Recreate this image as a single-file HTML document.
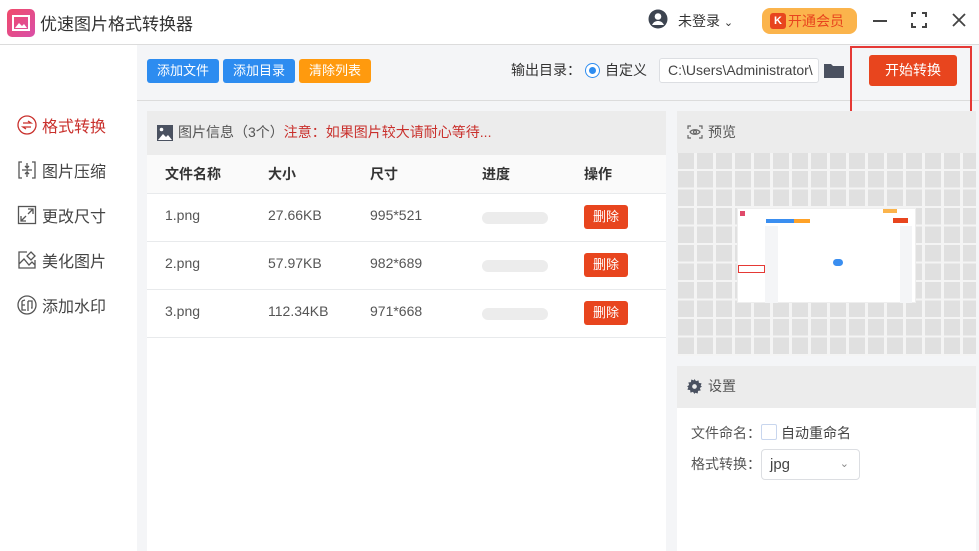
<!DOCTYPE html>
<html><head><meta charset="utf-8"><style>
*{margin:0;padding:0;box-sizing:border-box}
body{width:979px;height:551px;overflow:hidden;background:#fff;font-family:"Liberation Sans","Noto Sans CJK SC",sans-serif;position:relative;color:#333}
.a{position:absolute}
.btn{position:absolute;height:24px;color:#fff;font-size:13px;line-height:24px;text-align:center;border-radius:3px}
.th{position:absolute;top:164px;font-size:14px;color:#333;font-weight:bold}
.td{position:absolute;font-size:14px;color:#555}
.bar{position:absolute;left:482px;width:66px;height:12px;border-radius:6px;background:#ececec}
.del{position:absolute;left:584px;width:44px;height:24px;background:#e8451e;color:#fff;font-size:13px;line-height:24px;text-align:center;border-radius:3px}
.nav{position:absolute;left:17px;font-size:16px;color:#444;display:flex;align-items:center;gap:5px}
.ic{width:20px;height:20px;display:inline-block}
</style></head><body>
<div class="a" style="left:0;top:44px;width:979px;height:1px;background:#dcdcdc"></div>
<div class="a" style="left:7px;top:9px;width:28px;height:28px;border-radius:5px;background:linear-gradient(135deg,#f04a6a,#d94fa8)">
<svg width="28" height="28" viewBox="0 0 28 28"><rect x="6" y="7" width="16" height="14" fill="none" stroke="#fff" stroke-width="2"/><path d="M8 19l4-5 3 3 2-2 3 4z" fill="#fff"/></svg></div>
<div class="a" style="left:40px;top:10px;font-size:17px;color:#333">优速图片格式转换器</div>
<svg class="a" style="left:648px;top:9px" width="20" height="20" viewBox="0 0 20 20"><circle cx="10" cy="10" r="9.5" fill="#3d4450"/><circle cx="10" cy="7.5" r="3.3" fill="#fff"/><path d="M4 16c1.5-3 3.5-4 6-4s4.5 1 6 4" fill="#fff"/></svg>
<div class="a" style="left:678px;top:11px;font-size:14px;color:#333">未登录 <span style="font-size:11px">⌄</span></div>
<div class="a" style="left:762px;top:8px;width:95px;height:26px;border-radius:8px;background:#fbb44c;color:#e8451e;font-size:14px;line-height:26px;padding-left:26px">开通会员</div>
<div class="a" style="left:770px;top:13px;width:16px;height:16px;background:#e8451e;border-radius:3px;color:#fff;font-size:11px;line-height:16px;text-align:center;font-weight:bold">K</div>
<div class="a" style="left:873px;top:20px;width:14px;height:2px;background:#444"></div>
<svg class="a" style="left:911px;top:12px" width="16" height="16" viewBox="0 0 16 16" fill="none" stroke="#444" stroke-width="2"><path d="M1 5V1h4M11 1h4v4M15 11v4h-4M5 15H1v-4"/></svg>
<svg class="a" style="left:952px;top:13px" width="14" height="14" viewBox="0 0 14 14" stroke="#444" stroke-width="1.8"><path d="M1 1l12 12M13 1L1 13"/></svg>
<div class="a" style="left:137px;top:45px;width:842px;height:506px;background:#f4f5f7"></div>
<div class="nav" style="top:113px;color:#c9302c"><svg class="ic" viewBox="0 0 20 20" fill="none" stroke="#c9302c" stroke-width="1.3"><circle cx="10" cy="10" r="9"/><path d="M6 8h8l-3-2M14 12H6l3 2"/></svg>格式转换</div>
<div class="nav" style="top:158px"><svg class="ic" viewBox="0 0 20 20" fill="none" stroke="#555" stroke-width="1.3"><path d="M5 2H2v16h3M15 2h3v16h-3M5 10h10M10 3v5l-2-2M10 8l2-2M10 17v-5l-2 2M10 12l2 2"/></svg>图片压缩</div>
<div class="nav" style="top:203px"><svg class="ic" viewBox="0 0 20 20" fill="none" stroke="#555" stroke-width="1.3"><rect x="1.5" y="1.5" width="17" height="17"/><path d="M11 4h5v5M16 4l-5 5M4 11v5h5M4 16l5-5"/></svg>更改尺寸</div>
<div class="nav" style="top:248px"><svg class="ic" viewBox="0 0 20 20" fill="none" stroke="#555" stroke-width="1.3"><path d="M10 2H2v16h16v-8M2 14l5-5 5 6 3-3 3 3"/><path d="M14 2l4 4-4 4-4-4z"/></svg>美化图片</div>
<div class="nav" style="top:293px"><svg class="ic" viewBox="0 0 20 20" fill="none" stroke="#555" stroke-width="1.3"><circle cx="10" cy="10" r="9"/><path d="M5 6v9h4M5 10h3M8 5l-3 1M11 6h4v7h-1M11 6v10"/></svg>添加水印</div>
<div class="a" style="left:137px;top:100px;width:842px;height:1px;background:#dcdcdc"></div>
<div class="btn" style="left:147px;top:59px;width:72px;background:#2d8cf0">添加文件</div>
<div class="btn" style="left:223px;top:59px;width:72px;background:#2d8cf0">添加目录</div>
<div class="btn" style="left:299px;top:59px;width:72px;background:#ff9a0e">清除列表</div>
<div class="a" style="left:511px;top:60px;font-size:14px;color:#333">输出目录：</div>
<div class="a" style="left:585px;top:63px;width:15px;height:15px;border-radius:50%;border:1px solid #2d8cf0;background:#fff"><div style="margin:3px;width:7px;height:7px;border-radius:50%;background:#2d8cf0"></div></div>
<div class="a" style="left:605px;top:60px;font-size:14px;color:#333">自定义</div>
<div class="a" style="left:659px;top:58px;width:160px;height:25px;background:#fff;border:1px solid #dcdee2;border-radius:3px;font-size:14px;color:#444;line-height:23px;padding-left:8px;overflow:hidden;white-space:nowrap">C:\Users\Administrator\</div>
<svg class="a" style="left:824px;top:62px" width="20" height="16" viewBox="0 0 20 16"><path d="M0 2h7l2 2h11v12H0z" fill="#4a5160"/></svg>
<div class="btn" style="left:869px;top:55px;width:88px;height:31px;line-height:31px;background:#e8451e;font-size:14px">开始转换</div>
<div class="a" style="left:850px;top:46px;width:122px;height:75px;border:2px solid #e53935"></div>
<div class="a" style="left:147px;top:111px;width:519px;height:440px;background:#fff"></div>
<div class="a" style="left:147px;top:111px;width:519px;height:44px;background:#ececec"></div>
<svg class="a" style="left:157px;top:125px" width="16" height="16" viewBox="0 0 16 16"><rect width="16" height="16" fill="#4a5160"/><circle cx="4.5" cy="4.5" r="1.8" fill="#fff"/><path d="M1 15l5-6 3 3 2-2 4 5z" fill="#fff"/></svg>
<div class="a" style="left:178px;top:122px;font-size:14px;color:#555">图片信息（3个）<span style="color:#c9302c">注意：如果图片较大请耐心等待...</span></div>
<div class="a" style="left:147px;top:155px;width:519px;height:38px;background:#fafafa"></div>
<div class="th" style="left:165px">文件名称</div><div class="th" style="left:268px">大小</div><div class="th" style="left:370px">尺寸</div><div class="th" style="left:482px">进度</div><div class="th" style="left:584px">操作</div>
<div class="a" style="left:147px;top:193px;width:519px;height:1px;background:#e8eaec"></div>
<div class="a" style="left:147px;top:241px;width:519px;height:1px;background:#e8eaec"></div>
<div class="a" style="left:147px;top:289px;width:519px;height:1px;background:#e8eaec"></div>
<div class="a" style="left:147px;top:337px;width:519px;height:1px;background:#e8eaec"></div>
<div class="td" style="left:165px;top:207px">1.png</div><div class="td" style="left:268px;top:207px">27.66KB</div><div class="td" style="left:370px;top:207px">995*521</div><div class="bar" style="top:212px"></div><div class="del" style="top:205px">删除</div>
<div class="td" style="left:165px;top:255px">2.png</div><div class="td" style="left:268px;top:255px">57.97KB</div><div class="td" style="left:370px;top:255px">982*689</div><div class="bar" style="top:260px"></div><div class="del" style="top:253px">删除</div>
<div class="td" style="left:165px;top:303px">3.png</div><div class="td" style="left:268px;top:303px">112.34KB</div><div class="td" style="left:370px;top:303px">971*668</div><div class="bar" style="top:308px"></div><div class="del" style="top:301px">删除</div>
<div class="a" style="left:677px;top:111px;width:299px;height:42px;background:#ececec"></div>
<svg class="a" style="left:687px;top:125px" width="16" height="14" viewBox="0 0 16 14" fill="none" stroke="#666" stroke-width="1.2"><path d="M1 4V1h3M12 1h3v3M15 10v3h-3M4 13H1v-3"/><path d="M3 7c2-3 8-3 10 0-2 3-8 3-10 0z"/><circle cx="8" cy="7" r="1.5"/></svg>
<div class="a" style="left:708px;top:122px;font-size:14px;color:#555">预览</div>
<div class="a" style="left:677px;top:153px;width:299px;height:203px;background-color:#f4f4f4;background-image:repeating-linear-gradient(0deg,#f4f4f4 0 2px,transparent 2px 18.5px),repeating-linear-gradient(90deg,transparent 0 1px,#e0e0e0 1px 17px,transparent 17px 19px);"></div>
<div class="a" style="left:737px;top:208px;width:179px;height:95px;background:#fff;border:1px solid #eee">
<div style="position:absolute;left:2px;top:2px;width:5px;height:5px;background:#e04a6a"></div>
<div style="position:absolute;left:28px;top:10px;width:40px;height:4px;background:#3a8ef0"></div>
<div style="position:absolute;left:56px;top:10px;width:16px;height:4px;background:#ffa228"></div>
<div style="position:absolute;left:155px;top:9px;width:15px;height:5px;background:#e8451e"></div>
<div style="position:absolute;left:145px;top:0;width:14px;height:4px;background:#fbb44c"></div>
<div style="position:absolute;left:0;top:56px;width:27px;height:8px;border:1px solid #e53935"></div>
<div style="position:absolute;left:27px;top:17px;width:13px;height:77px;background:#f4f5f7"></div>
<div style="position:absolute;left:162px;top:17px;width:12px;height:77px;background:#f4f5f7"></div>
<div style="position:absolute;left:95px;top:50px;width:10px;height:7px;border-radius:4px;background:#3a8ef0"></div>
</div>
<div class="a" style="left:677px;top:366px;width:299px;height:185px;background:#fff"></div>
<div class="a" style="left:677px;top:366px;width:299px;height:42px;background:#ececec"></div>
<svg class="a" style="left:687px;top:379px" width="15" height="15" viewBox="0 0 16 16"><path d="M8 0l1.6 2.3 2.7-.9.4 2.8 2.8.4-.9 2.7L16 8l-2.3 1.6.9 2.7-2.8.4-.4 2.8-2.7-.9L8 16l-1.6-2.3-2.7.9-.4-2.8-2.8-.4.9-2.7L0 8l2.3-1.6-.9-2.7 2.8-.4.4-2.8 2.7.9z" fill="#4a5160"/><circle cx="8" cy="8" r="2.5" fill="#ececec"/></svg>
<div class="a" style="left:708px;top:376px;font-size:14px;color:#555">设置</div>
<div class="a" style="left:691px;top:423px;font-size:14px;color:#555">文件命名：</div>
<div class="a" style="left:761px;top:424px;width:16px;height:16px;border:1px solid #c8d6ee;border-radius:2px"></div>
<div class="a" style="left:781px;top:423px;font-size:14px;color:#444">自动重命名</div>
<div class="a" style="left:691px;top:454px;font-size:14px;color:#555">格式转换：</div>
<div class="a" style="left:761px;top:449px;width:99px;height:31px;border:1px solid #dcdee2;border-radius:4px;font-size:15px;color:#444;line-height:29px;padding-left:8px">jpg<span style="position:absolute;right:10px;top:0;font-size:11px;color:#888">⌄</span></div>
</body></html>
